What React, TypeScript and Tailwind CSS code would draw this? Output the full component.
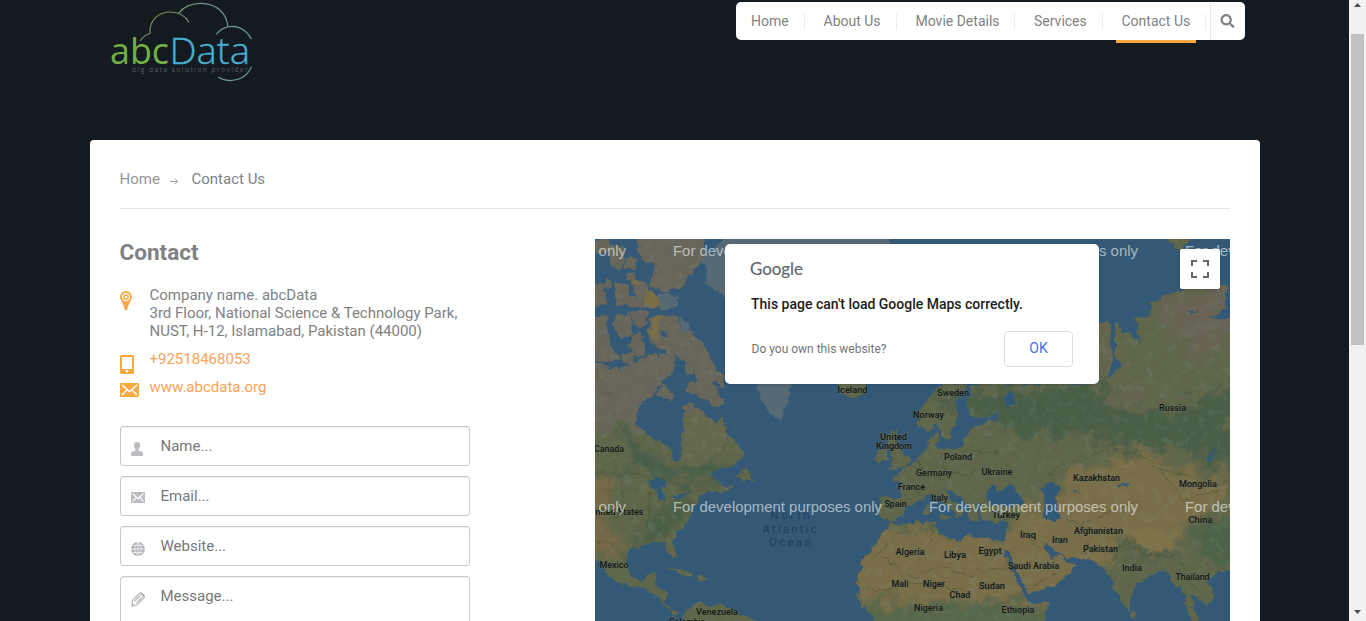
import React from "react";
import { FaSearch } from "react-icons/fa";

const navItems = [
  { label: "Home", box: "w-[69px] pl-[15px]", active: false },
  { label: "About Us", box: "w-[92px] pl-[18.5px]", active: false },
  { label: "Movie Details", box: "w-[118px] pl-[18.5px]", active: false },
  { label: "Services", box: "w-[88px] pl-[19px]", active: false },
  { label: "Contact Us", box: "w-[103px] pl-[18.5px]", active: true },
];

function Logo() {
  return (
    <svg className="ml-[20px] block h-[84px] w-[146px] shrink-0" viewBox="110 0 146 84" fill="none">
      <defs>
        <linearGradient id="cloud" x1="140" x2="252" y1="0" y2="0" gradientUnits="userSpaceOnUse">
          <stop offset="0" stopColor="#6d9463" />
          <stop offset=".3" stopColor="#71935f" />
          <stop offset=".55" stopColor="#77918b" />
          <stop offset="1" stopColor="#6a949d" />
        </linearGradient>
      </defs>
      <g stroke="url(#cloud)" strokeWidth="1.2">
        <path d="M140 41Q144 35 150 33.5C149 20 159 12 170 12C178 12 185 15 189 22.5" />
        <path d="M178.5 13.3C184 6 192 3.3 201 3.3C216 3.3 226.5 13 227.9 26.4" />
        <path d="M216 34.3C221 28.5 226 26.4 232 26.4C240 26.4 247.5 31 251.3 39" />
        <path d="M251.5 66.7C247 77 238 80.6 230.5 80.6Q224 80.6 218.3 77.3" />
      </g>
      <g fontFamily="'Open Sans', 'Noto Sans', sans-serif" fontSize="36">
        <text x="110" y="63.5" textLength="59" lengthAdjust="spacingAndGlyphs" fill="#72b045" fontWeight="400">abc</text>
        <text x="169.5" y="63.5" textLength="80.5" lengthAdjust="spacingAndGlyphs" fill="#4baed2" stroke="#4baed2" strokeWidth=".35" fontWeight="300">Data</text>
      </g>
      <text x="132" y="71.7" textLength="116" fill="#585d62" fontFamily="'Open Sans', sans-serif" fontSize="6.6">big data solution provider</text>
    </svg>
  );
}

function PinIcon() {
  return (
    <svg className="mt-[5px] h-[20px] w-[12px]" viewBox="0 0 12 20">
      <path fill="#f8a942" fillRule="evenodd" d="M6 0a6 6 0 0 1 6 6.1C12 9.5 8 12.5 7.2 19.2H4.8C4 12.5 0 9.5 0 6.1A6 6 0 0 1 6 0Zm0 1.9a4.2 4.2 0 1 0 0 8.4 4.2 4.2 0 0 0 0-8.4Z" />
      <circle cx="6" cy="6.1" r="2.2" fill="none" stroke="#f8a942" strokeWidth="1.5" />
    </svg>
  );
}

function TabletIcon() {
  return (
    <svg className="mt-[5px] h-[19px] w-[14px]" viewBox="0 0 14 19">
      <path fill="#f8a942" fillRule="evenodd" d="M1.5 0h11A1.5 1.5 0 0 1 14 1.5v16a1.5 1.5 0 0 1-1.5 1.5h-11A1.5 1.5 0 0 1 0 17.5v-16A1.5 1.5 0 0 1 1.5 0ZM2 2v12h10V2H2Zm5 12.8a1.4 1.4 0 1 0 0 2.8 1.4 1.4 0 0 0 0-2.8Z" />
    </svg>
  );
}

function MailIcon({ className, fill }: { className: string; fill: string }) {
  return (
    <svg className={className} viewBox="0 0 19 14" preserveAspectRatio="none">
      <rect width="19" height="14" rx="1" fill={fill} />
      <path d="M2 2l7.5 6.5L17 2M2 12l5-5M17 12l-5-5" fill="none" stroke="#fff" strokeWidth="1.6" />
    </svg>
  );
}

function UserIcon() {
  return (
    <svg className="mt-[15px] h-[14px] w-[12px]" viewBox="0 0 12 14" fill="#bbbdc0">
      <ellipse cx="6" cy="3.6" rx="3.1" ry="3.6" />
      <path d="M4.5 6h3v2.5c2 .5 4.5 1 4.5 3.5v2H0v-2c0-2.5 2.5-3 4.5-3.5Z" />
    </svg>
  );
}

function GlobeIcon() {
  return (
    <svg className="mt-[15px] h-[14px] w-[14px]" viewBox="0 0 14 14">
      <circle cx="7" cy="7" r="7" fill="#b2b4b7" />
      <path d="M7 0v14M0 7h14M1.5 3.5h11M1.5 10.5h11M7 .5C2.5 4 2.5 10 7 13.5C11.5 10 11.5 4 7 .5" fill="none" stroke="#fff" strokeWidth=".65" />
    </svg>
  );
}

function PencilIcon() {
  return (
    <svg className="mt-[15px] h-[15px] w-[14px]" viewBox="0 0 14 15">
      <path d="M1 14L1.5 8.5L8.5 1.5Q10 0 12.3 2.5Q14.2 4.7 12.8 6L6 12.8Z" fill="#fff" stroke="#b2b4b7" strokeWidth="1.2" />
      <path d="M8.4 1.3l4.5 4.6.6-1.4L10 .8Z M.8 14.3l.4-3.2 2.7 2.5Z" fill="#b2b4b7" />
      <path d="M3.4 9.4l5.8-5.9M5.2 11.2l5.8-5.8" stroke="#b2b4b7" strokeWidth="1.1" />
    </svg>
  );
}

type Label = [string, number, number, number];
const labels: Label[] = [
  ["Iceland", 852.5, 392.5, 30], ["Sweden", 953, 395.5, 32], ["Norway", 928.5, 417.5, 31],
  ["United", 893.5, 439.5, 27], ["Kingdom", 894, 448.5, 36], ["Poland", 958, 459.5, 28],
  ["Germany", 934, 475.5, 36], ["France", 911.5, 489.5, 27], ["Ukraine", 997, 474.5, 31],
  ["Italy", 939.5, 500.5, 17], ["Spain", 895.5, 507, 22], ["Turkey", 1006, 517.5, 28],
  ["Iraq", 1028, 537.5, 16], ["Iran", 1060, 542.5, 16], ["Algeria", 910, 554.5, 29],
  ["Libya", 955, 557.5, 22], ["Egypt", 990, 553.5, 23], ["Saudi Arabia", 1033.5, 568.5, 51],
  ["Mali", 900, 586.5, 17], ["Niger", 934, 586.5, 22], ["Sudan", 992, 588.5, 26],
  ["Chad", 960, 597.5, 21], ["Nigeria", 928.5, 610.5, 29], ["Ethiopia", 1018, 612.5, 33],
  ["Kazakhstan", 1096.5, 480.5, 47], ["Mongolia", 1198, 486.5, 38], ["China", 1200.5, 522.5, 24],
  ["Afghanistan", 1098.5, 533.5, 49], ["Pakistan", 1100.5, 551.5, 35], ["India", 1132, 570.5, 20],
  ["Thailand", 1192.5, 579.5, 34], ["Russia", 1172.5, 410.5, 27], ["Canada", 609, 451.5, 30],
  ["United States", 616.5, 514.5, 54], ["Mexico", 614, 567.5, 29], ["Venezuela", 717, 614.5, 42],
  ["Colombia", 687, 624.5, 36],
];

const watermarks: [number, number][] = [
  [417, 255.5], [673, 255.5], [929, 255.5], [1185, 255.5],
  [417, 511.5], [673, 511.5], [929, 511.5], [1185, 511.5],
];

function Continents() {
  return (
    <>
      {/* North America */}
      <path d="M590 363L600 363L610 368L622 368L635 362L648 356L655 352L662 360L668 370L666 378L656 388L654 395L644 400L637 411L636 422L643 433L660 442L670 447L673 460L678 461L681 450L682 440L685 427L683 407L690 403L703 410L708 420L718 422L722 418L727 428L730 437L740 448L745 455L737 463L723 468L711 472L716 480L725 486L733 488L720 493L707 491L698 498L692 510L688 523L677 533L672 540L677 557L673 559L668 550L667 543L653 542L640 546L630 550L625 563L632 577L643 580L648 573L657 572L653 583L667 592L665 603L673 610L679 612L676 616L668 609L658 597L643 588L623 585L607 575L602 563L590 550Z" />
      {/* South America and the Caribbean */}
      <path d="M682 630L685 612L698 602L705 606L723 605L737 612L757 621L765 630Z" />
      <path d="M668 567L680 568L692 575L690 577L678 572Z M696 577L704 576L708 579L698 580Z M738 479L742 470L747 466L748 473L754 479Z" />
      {/* Arctic islands */}
      <path d="M651 344L665 336L678 328L692 335L703 342L710 358L723 377L724 388L711 381L724 400L718 409L705 399L693 395L685 388L697 380L693 369L685 361L673 354Z" />
      <path d="M662 352L673 353L674 370L664 380L658 368Z M662 382L676 397L670 401L657 394Z M685 365L694 366L692 375L685 373Z M633 335L641 331L646 354L638 359L629 348Z M632 312L649 311L644 327L633 326Z M615 316L630 313L633 334L621 340L614 327Z M590 317L606 315L608 334L614 352L620 358L606 362L590 358Z M650 318L663 314L665 324L661 342L648 341Z M664 315L676 316L681 330L670 336L660 330Z M590 282L605 285L606 304L590 308Z M615 283L628 284L630 303L617 306Z M630 279L641 279L646 290L660 297L662 308L640 308Z M654 266L667 271L683 274L684 288L664 292L648 286Z M636 232L704 232L704 258L684 282L661 274L656 263L644 262L638 250Z M590 241L608 238L611 250L598 254Z M611 246L625 248L622 270L609 265Z M625 257L636 258L635 269L625 269Z M629 296L640 296L639 307L629 307Z M623 353L634 353L633 364L622 363Z M605 278L613 281L610 290L604 286Z M626 272L636 273L635 280L627 279Z M655 256L664 257L662 268L654 265Z" />
      {/* Iceland and the British Isles */}
      <path d="M836 384L866 384L865 392L853 398L841 393Z" />
      <path d="M877 451L886 448L889 459L879 464L874 459Z M885 435L897 429L898 448L910 458L906 467L888 470L893 460L889 451Z" />
      {/* Europe and Asia */}
      <path d="M943 384L933 393L920 410L918 425L930 432L938 422L942 438L951 438L954 423L959 413L955 403L963 390L970 382L972 390L967 402L969 417L990 418L1000 410L997 420L985 422L973 426L965 437L963 447L950 448L937 450L938 433L930 436L927 449L917 457L908 467L892 477L902 485L900 498L880 497L880 518L890 522L903 517L905 508L920 500L933 495L947 505L957 513L955 520L965 512L951 500L943 489L954 491L967 503L971 522L980 520L976 506L984 503L981 515L985 521L1007 522L1005 541L967 535L958 542L937 532L935 522L890 523L877 543L862 562L857 583L858 600L873 617L876 630L1040 630L1050 602L1030 603L1017 583L1003 550L1008 550L1020 577L1028 594L1057 585L1075 567L1063 556L1050 557L1042 545L1048 543L1057 553L1070 558L1093 560L1107 572L1115 590L1127 612L1132 600L1132 590L1150 575L1167 570L1175 587L1183 588L1187 607L1195 626L1198 621L1192 606L1193 594L1207 607L1215 597L1207 580L1217 573L1240 568L1240 316L1210 320L1227 307L1227 287L1205 282L1180 290L1152 302L1150 315L1135 318L1138 328L1139 345L1130 332L1121 331L1119 323L1115 325L1115 358L1124 365L1108 379L1107 386L1112 360L1110 330L1107 320L1095 327L1085 384Z" />
      <path d="M1132 609L1137 613L1135 618L1131 615Z M1163 234L1190 234L1184 251L1174 248Z M941 514L951 516L943 521Z M924 506L931 503L931 514L924 514Z" />
    </>
  );
}

function WorldMap() {
  return (
    <svg className="absolute inset-0 block h-[382px] w-[635px]" viewBox="595 239 635 382">
      <defs>
        <filter id="rough" x="590" y="230" width="645" height="400" filterUnits="userSpaceOnUse">
          <feTurbulence type="fractalNoise" baseFrequency=".14" numOctaves="3" seed="8" result="n" />
          <feDisplacementMap in="SourceGraphic" in2="n" scale="8" xChannelSelector="R" yChannelSelector="G" />
        </filter>
        <filter id="terrain" x="590" y="230" width="645" height="400" filterUnits="userSpaceOnUse">
          <feGaussianBlur in="SourceGraphic" stdDeviation="4" result="b" />
          <feTurbulence type="fractalNoise" baseFrequency=".06" numOctaves="4" seed="3" result="n" />
          <feDisplacementMap in="b" in2="n" scale="38" xChannelSelector="R" yChannelSelector="G" />
        </filter>
        <filter id="speckle" x="590" y="230" width="645" height="400" filterUnits="userSpaceOnUse">
          <feTurbulence type="fractalNoise" baseFrequency=".13" numOctaves="3" seed="12" />
          <feColorMatrix values="0 0 0 0 .22  0 0 0 0 .31  0 0 0 0 .25  3 0 0 0 -1.5" />
        </filter>
        <clipPath id="land"><Continents /></clipPath>
      </defs>
      <rect x="595" y="239" width="635" height="382" fill="#335977" />
      <g filter="url(#rough)">
        <path d="M700 258L712 252L726 236L890 236L890 300L792 384L790 397L780 420L770 414L763 403L757 384L730 300L718 292L705 283L708 270Z M657 297L667 293L678 295L678 307L660 310Z M678 317L688 324L692 337L681 334Z" fill="#566b75" />
        <g clipPath="url(#land)">
          <rect x="590" y="230" width="650" height="400" fill="#5f6649" />
          <g filter="url(#terrain)">
            <path d="M580 220H735V410L680 410L640 430L580 425Z" fill="#68655a" />
            <path d="M680 405L730 420L740 445L690 455Z" fill="#66674e" />
            <path d="M618 428L640 438L650 452L673 468L735 460L720 490L690 482L655 480L630 464Z" fill="#485d48" />
            <path d="M655 510L690 493L692 508L668 535L645 545L638 530Z" fill="#4c5e44" />
            <path d="M580 465L608 480L610 525L622 555L600 555L580 535Z" fill="#76684a" />
            <path d="M925 395L1100 385L1160 415L1240 385V475L1180 445L1140 450L1090 433L1020 438L965 410Z" fill="#4a5d47" />
            <path d="M1150 300L1240 280V325L1200 365L1185 345L1160 325Z" fill="#676455" />
            <path d="M1100 310L1116 320L1118 375L1090 385Z M1110 390L1140 380L1135 410L1110 410Z" fill="#66654f" />
            <path d="M840 525L1000 535L1035 500L1080 470L1150 450L1170 470L1230 475V510L1185 520L1180 550L1150 550L1120 535L1110 565L1095 562L1075 590L1060 620L1025 590L1000 602L860 602Z" fill="#7a6e48" />
            <path d="M1118 535L1145 552L1180 550L1175 560L1140 556Z" fill="#485d49" />
            <path d="M1195 525L1240 510V575L1200 555Z" fill="#4e6246" />
            <path d="M870 605L1040 606V640H870Z" fill="#56674a" />
          </g>
          <rect x="590" y="230" width="650" height="400" filter="url(#speckle)" opacity=".22" />
          <path d="M1130 532Q1145 525 1160 530L1172 545L1155 552L1137 544Z" fill="#80724b" />
        </g>
        <g fill="#335977">
          <path d="M991 507L985 498L992 484L1000 492L1012 482L1015 489L1025 503L1016 507L1004 504Z" />
          <path d="M1041 486L1054 483L1060 488L1056 500L1060 520L1046 520L1042 510L1046 501Z" />
          <path d="M1076 489L1079 492L1075 493Z M1115 484L1129 482L1129 485L1116 488Z M1206 460L1216 445L1218 448L1211 461Z M648 482L658 477L668 486L661 487L666 501L659 500L656 491Z M670 497L690 492L680 500Z M1004 397L1012 390L1015 404L1006 408Z M1188 308L1198 311L1189 313Z" />
        </g>
        <g fill="#7e7142">
          <path d="M652 318L661 316L658 340L650 338Z M645 285L660 300L658 307L646 305Z M630 281L638 279L640 285Z" opacity=".8" />
        </g>
        <g fill="none" stroke="#38442d" strokeWidth=".6" opacity=".7">
          <path d="M595 473H634L656 480M595 541L612 543L626 560M650 490L648 535M730 425L723 450" />
          <path d="M595 490H638M609 473V525M622 473V530M595 517H650M595 391L618 395M616 408V470M678 460V485" strokeDasharray="2 1.5" />
          <path d="M881 555L913 578L940 566L973 577M862 557L880 552L902 530M976 569H1011M933 525L931 543M860 589L890 590L905 582L945 588L965 590M1000 550L1012 570M1005 520L1022 515L1038 512L1045 519M1020 530L1040 548M1028 590L1055 573" />
          <path d="M902 480L925 498M917 458L925 475L945 480M940 452L945 470L970 475L985 465M965 450L998 453L1015 478M1040 482L1060 465L1080 460L1110 447L1140 455L1160 470M1055 515L1080 525L1110 512L1140 500M1090 535L1085 555M1110 565L1125 540L1145 555L1175 557M1155 468L1185 475L1215 487L1230 480M1160 470L1185 500L1220 490M1180 552L1187 580L1198 590" />
        </g>
      </g>
      <g fill="#213e59" fontFamily="Roboto, sans-serif" fontSize="11.5" textAnchor="middle">
        <text x="790" y="519" textLength="39">North</text>
        <text x="789.5" y="532.5" textLength="54">Atlantic</text>
        <text x="790" y="546" textLength="42">Ocean</text>
      </g>
      <g fill="#121613" stroke="#687260" strokeOpacity=".45" strokeWidth="1.5" paintOrder="stroke" fontFamily="Roboto, sans-serif" fontSize="9.3" fontWeight="500" textAnchor="middle">
        {labels.map(([name, x, y, w]) => (
          <text key={name} x={x} y={y} textLength={w} lengthAdjust="spacingAndGlyphs">{name}</text>
        ))}
      </g>
      <g fill="#fff" fillOpacity=".58" fontFamily="'Liberation Sans', Arial, sans-serif" fontSize="15">
        {watermarks.map(([x, y]) => (
          <text key={`${x}-${y}`} x={x} y={y} textLength="209" lengthAdjust="spacingAndGlyphs">For development purposes only</text>
        ))}
      </g>
    </svg>
  );
}

function MapDialog() {
  return (
    <div className="absolute left-[130px] top-[5px] flex h-[140px] w-[374px] flex-col rounded-[5px] bg-white pl-[25px] pr-[26px] pt-[15px] shadow-sm">
      <svg className="block h-[22px] w-[54px]" viewBox="0 0 54 22">
        <text x="0" y="16" textLength="53" lengthAdjust="spacingAndGlyphs" fill="#65686c" stroke="#65686c" strokeWidth=".2" fontFamily="Lato, sans-serif" fontSize="17.5">Google</text>
      </svg>
      <p className="mt-[13px] whitespace-nowrap pl-[1px] text-[14px] font-medium leading-[20px] text-[#212121]">This page can't load Google Maps correctly.</p>
      <div className="mt-[17px] flex items-center justify-between">
        <span className="pl-[1.5px] text-[12px] text-[#757575]">Do you own this website?</span>
        <button className="h-[36px] w-[69px] rounded-[4px] border border-[#dadce0] pb-px text-[14px] text-[#4472dc]">OK</button>
      </div>
    </div>
  );
}

function Field({ label, icon, tall }: { label: string; icon: React.ReactNode; tall?: boolean }) {
  return (
    <div className={`flex ${tall ? "h-[90px]" : "h-[40px]"} w-[350px] shrink-0 rounded-[3px] border border-[#c9cacc] pl-[10px] shadow-[inset_0_1px_1px_rgba(0,0,0,0.07)]`}>
      <span className="w-[29.5px] shrink-0">{icon}</span>
      <span className="pt-[10px] text-[15px] leading-[18px] text-[#77787b]">{label}</span>
    </div>
  );
}

export default function App() {
  return (
    <div className="flex h-[621px] overflow-hidden bg-[#141b20] font-['Roboto',sans-serif] text-[#808285]">
      <div className="flex min-w-0 flex-1 flex-col pl-[90px]">
        <header className="flex h-[140px] w-[1170px] shrink-0 items-start justify-between pr-[15px]">
          <Logo />
          <nav className="mt-[2px] flex h-[38px] w-[509px] rounded-[5px] bg-white text-[14px]">
            {navItems.map((item) => (
              <a key={item.label} className={`relative flex h-full shrink-0 items-center ${item.box}`}>
                <span className="whitespace-nowrap">{item.label}</span>
                <span className="absolute right-0 top-[12px] h-[16px] w-px bg-[#ececed]" />
                {item.active && <span className="absolute left-[13px] top-[38px] h-[3px] w-[80px] bg-[#f8a942]" />}
              </a>
            ))}
            <span className="ml-[4px] flex flex-1 items-center border-l border-[#e6e7e8] pl-[9px]">
              <FaSearch className="h-[14px] w-[15px] text-[#808285]" />
            </span>
          </nav>
        </header>
        <main className="h-[500px] w-[1170px] shrink-0 rounded-t-[4px] bg-white px-[30px]">
          <div className="flex h-[69px] items-start border-b border-[#e6e7e8] pt-[29px] text-[15px] leading-[20px]">
            <span className="-ml-[0.5px] w-[49.5px] text-[#939598]">Home</span>
            <svg className="mt-[8px] h-[8px] w-[10px]" viewBox="0 0 10 8" fill="none" stroke="#939598" strokeWidth=".9">
              <path d="M1 4.5H8.5M6 2L8.7 4.5L6 7" />
            </svg>
            <span className="pl-[12.5px]">Contact Us</span>
          </div>
          <div className="flex justify-between pt-[30px]">
            <section className="w-[350px]">
              <h1 className="-ml-[0.5px] text-[22.5px] font-bold leading-[27px]">Contact</h1>
              <div className="mt-[20px] flex h-[54px] text-[15px] leading-[18px]">
                <span className="w-[29.5px] shrink-0"><PinIcon /></span>
                <p className="whitespace-nowrap">Company name. abcData<br />3rd Floor, National Science &amp; Technology Park,<br />NUST, H-12, Islamabad, Pakistan (44000)</p>
              </div>
              <div className="mt-[10px] flex h-[18px] text-[15px] leading-[18px] text-[#f7a35c]">
                <span className="w-[29.5px] shrink-0"><TabletIcon /></span>+92518468053
              </div>
              <div className="mt-[10px] flex h-[18px] text-[15px] leading-[18px] text-[#f7a35c]">
                <span className="w-[29.5px] shrink-0"><MailIcon className="mt-[5px] h-[14px] w-[19px]" fill="#f8a942" /></span>www.abcdata.org
              </div>
              <form className="mt-[30px] flex flex-col gap-[10px]">
                <Field label="Name..." icon={<UserIcon />} />
                <Field label="Email..." icon={<MailIcon className="mt-[15px] h-[11px] w-[14px]" fill="#bbbdc0" />} />
                <Field label="Website..." icon={<GlobeIcon />} />
                <Field label="Message..." icon={<PencilIcon />} tall />
              </form>
            </section>
            <section className="relative h-[382px] w-[635px] overflow-hidden">
              <WorldMap />
              <MapDialog />
              <button className="absolute left-[585px] top-[10px] flex h-[40px] w-[40px] items-center justify-center rounded-[2px] bg-white shadow">
                <svg className="h-[18px] w-[18px]" viewBox="0 0 18 18" fill="none" stroke="#666" strokeWidth="2">
                  <path d="M1 6V1H6M12 1H17V6M17 12V17H12M6 17H1V12" />
                </svg>
              </button>
            </section>
          </div>
        </main>
      </div>
      <aside className="flex w-[17px] shrink-0 flex-col items-center bg-[#f1f1f1]">
        <svg className="h-[34px] w-[17px] shrink-0" viewBox="0 0 17 34"><path d="M5 7L8.5 3L12 7Z" fill="#505050" /></svg>
        <div className="h-[311px] w-[13px] bg-[#c1c1c1]" />
        <svg className="mt-auto h-[17px] w-[17px] shrink-0" viewBox="0 0 17 17"><path d="M5 6L8.5 10L12 6Z" fill="#505050" /></svg>
      </aside>
    </div>
  );
}
